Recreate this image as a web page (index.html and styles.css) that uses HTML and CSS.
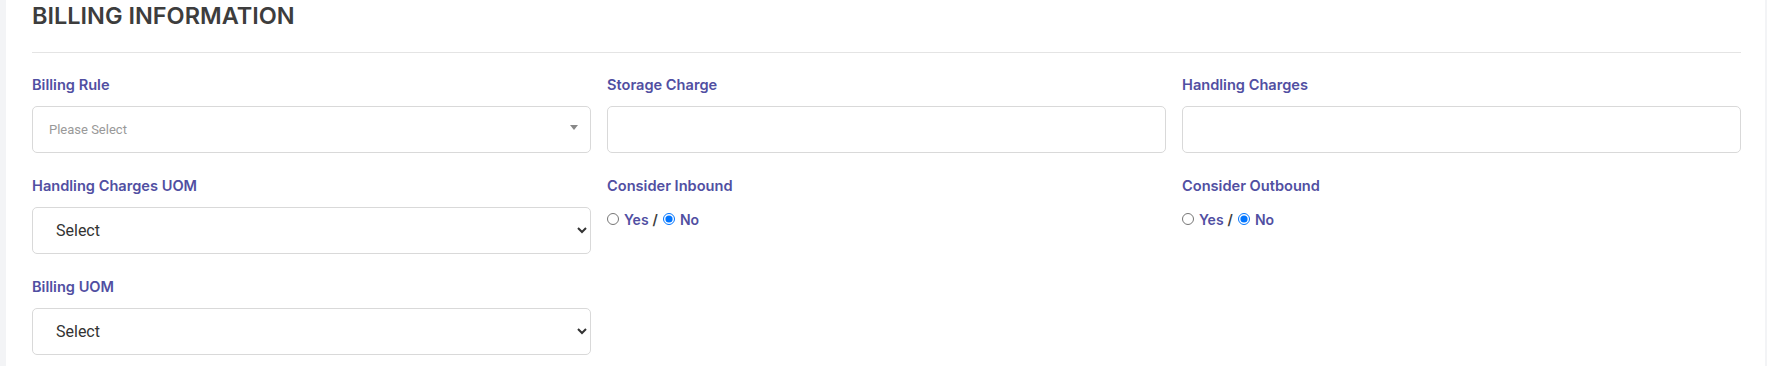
FILE: index.html
```html
<!DOCTYPE html>
<html lang="en">
<head>
    <meta charset="UTF-8">
    <title>Billing Information</title>
    <link rel="stylesheet" href="styles.css">
</head>
<body>

<div class="card">
    <!--标题-->
    <h3 class="card-title">BILLING INFORMATION</h3>

    <!--表单-->
    <div class="form-grid">
        <div class="field">
            <label class="field-label">Billing Rule</label>
            <div class="fake-select">
                <span class="placeholder">Please Select</span>
                <span class="caret"></span>
            </div>
        </div>
        <div class="field">
            <label class="field-label">Storage Charge</label>
            <input type="text" class="form-control">
        </div>
        <div class="field">
            <label class="field-label">Handling Charges</label>
            <input type="text" class="form-control">
        </div>

        <div class="field">
            <label class="field-label">Handling Charges UOM</label>
            <select class="form-control">
                <option>Select</option>
            </select>
        </div>
        <div class="field">
            <label class="field-label">Consider Inbound</label>
            <div class="radio-group">
                <input type="radio" name="inbound" id="in-yes">
                <label for="in-yes">Yes</label>
                <span class="sep">/</span>
                <input type="radio" name="inbound" id="in-no" checked>
                <label for="in-no">No</label>
            </div>
        </div>
        <div class="field">
            <label class="field-label">Consider Outbound</label>
            <div class="radio-group">
                <input type="radio" name="outbound" id="out-yes">
                <label for="out-yes">Yes</label>
                <span class="sep">/</span>
                <input type="radio" name="outbound" id="out-no" checked>
                <label for="out-no">No</label>
            </div>
        </div>

        <div class="field">
            <label class="field-label">Billing UOM</label>
            <select class="form-control">
                <option>Select</option>
            </select>
        </div>
    </div>
</div>

</body>
</html>
```

FILE: styles.css
```css
* {
    margin: 0;
    padding: 0;
    box-sizing: border-box;
}

body{
    background-color: #f3f4f6;
    font-family: Inter, "Noto Sans", sans-serif;
    height: 366px;
    overflow: hidden;
}

.card{
    margin: 0 2px 0 6px;
    padding: 0 24px 20px 26px;
    background-color: #ffffff;
    min-height: 366px;
}

.card-title{
    font-size: 23.5px;
    line-height: 32px;
    font-weight: 600;
    color: #3d3d3d;
    padding-bottom: 20px;
    border-bottom: 1px solid #e4e4e4;
}

.form-grid{
    margin-top: 22px;
    display: grid;
    grid-template-columns: repeat(3, 1fr);
    column-gap: 16px;
    row-gap: 23px;
}

.field-label{
    display: block;
    font-size: 14.6px;
    line-height: 20px;
    font-weight: 600;
    color: #514fa2;
    margin-bottom: 11px;
}

.form-control{
    display: block;
    width: 100%;
    height: 47px;
    border: 1px solid #d9d9d9;
    border-radius: 5px;
    background-color: #fff;
    font-family: Roboto, "Liberation Sans", sans-serif;
    font-size: 16px;
    color: #333;
    outline: none;
}

select.form-control{
    padding: 0 12px 0 19px;
}

.fake-select{
    height: 47px;
    border: 1px solid #d9d9d9;
    border-radius: 5px;
    padding: 0 12px 0 16px;

    display: flex;
    align-items: center;
    justify-content: space-between;
}

.placeholder{
    font-family: Roboto, "Liberation Sans", sans-serif;
    font-size: 13px;
    color: #999;
}

.caret{
    width: 0;
    height: 0;
    border-left: 4px solid transparent;
    border-right: 4px solid transparent;
    border-top: 5px solid #888;
    margin-top: -4px;
}

.radio-group{
    height: 24px;
    display: flex;
    align-items: center;

    font-size: 14px;
    font-weight: 600;
    color: #514fa2;
}

.radio-group input{
    width: 12px;
    height: 12px;
    margin: 0 5px 0 0;
}

.radio-group .sep{
    color: #3d3d3d;
    margin: 0 5px 0 4px;
}
```
